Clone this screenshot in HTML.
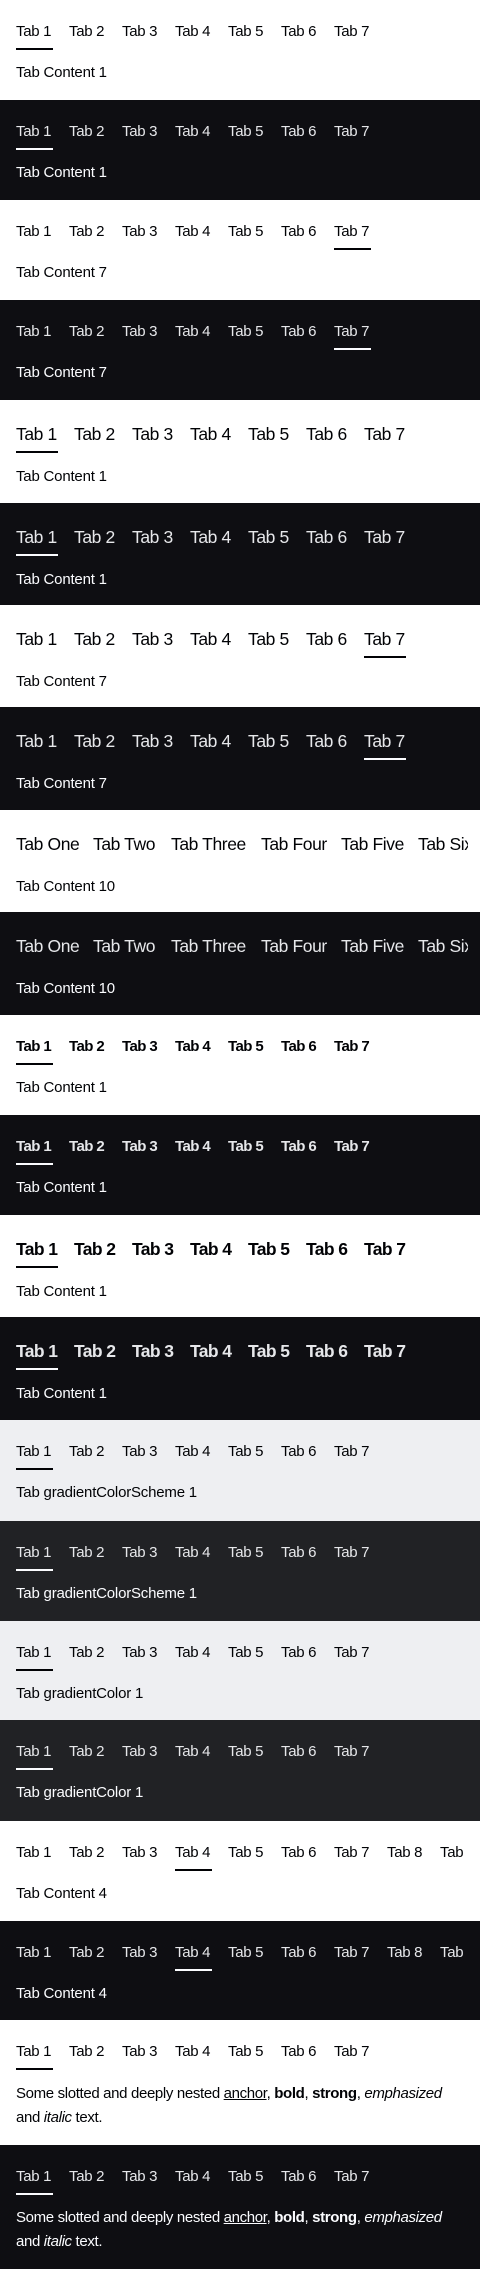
<!DOCTYPE html>
<html><head><meta charset="utf-8"><style>
*{margin:0;padding:0;box-sizing:border-box}
body{width:480px;font-family:"Liberation Sans",sans-serif;overflow:hidden}
.s{position:relative;overflow:hidden;width:480px}
.l{background:#fff;color:#010205}
.d{background:#0e0e12;color:#fbfcff}
.gl{background:#eeeff2;color:#010205}
.gd{background:#212225;color:#fbfcff}
.t{position:absolute;white-space:nowrap;top:20px;font-size:15px;line-height:24px;letter-spacing:-0.3px}
.m .t{top:21px;font-size:17.5px;line-height:26px;letter-spacing:-0.4px}
.b .t{font-weight:bold;letter-spacing:-0.6px}
.u{position:absolute;top:48px;height:2px;width:37px;background:currentColor}
.m .u{top:51px;width:42px}
.c{position:absolute;left:16px;top:61px;font-size:15px;line-height:24px;letter-spacing:-0.2px;white-space:nowrap}
.m .c{top:65px}
.d .t,.gd .t{color:#e6e7ea}
.p a{color:inherit;text-decoration:underline}
</style></head><body>

<div class="s l" style="height:100px"><span class="t" style="left:16px">Tab 1</span><span class="t" style="left:69px">Tab 2</span><span class="t" style="left:122px">Tab 3</span><span class="t" style="left:175px">Tab 4</span><span class="t" style="left:228px">Tab 5</span><span class="t" style="left:281px">Tab 6</span><span class="t" style="left:334px">Tab 7</span><div class="u" style="left:16px"></div><div class="c">Tab Content 1</div></div>

<div class="s d" style="height:100px"><span class="t" style="left:16px">Tab 1</span><span class="t" style="left:69px">Tab 2</span><span class="t" style="left:122px">Tab 3</span><span class="t" style="left:175px">Tab 4</span><span class="t" style="left:228px">Tab 5</span><span class="t" style="left:281px">Tab 6</span><span class="t" style="left:334px">Tab 7</span><div class="u" style="left:16px"></div><div class="c">Tab Content 1</div></div>

<div class="s l" style="height:100px"><span class="t" style="left:16px">Tab 1</span><span class="t" style="left:69px">Tab 2</span><span class="t" style="left:122px">Tab 3</span><span class="t" style="left:175px">Tab 4</span><span class="t" style="left:228px">Tab 5</span><span class="t" style="left:281px">Tab 6</span><span class="t" style="left:334px">Tab 7</span><div class="u" style="left:334px"></div><div class="c">Tab Content 7</div></div>

<div class="s d" style="height:100px"><span class="t" style="left:16px">Tab 1</span><span class="t" style="left:69px">Tab 2</span><span class="t" style="left:122px">Tab 3</span><span class="t" style="left:175px">Tab 4</span><span class="t" style="left:228px">Tab 5</span><span class="t" style="left:281px">Tab 6</span><span class="t" style="left:334px">Tab 7</span><div class="u" style="left:334px"></div><div class="c">Tab Content 7</div></div>

<div class="s l m" style="height:103px"><span class="t" style="left:16px">Tab 1</span><span class="t" style="left:74px">Tab 2</span><span class="t" style="left:132px">Tab 3</span><span class="t" style="left:190px">Tab 4</span><span class="t" style="left:248px">Tab 5</span><span class="t" style="left:306px">Tab 6</span><span class="t" style="left:364px">Tab 7</span><div class="u" style="left:16px"></div><div class="c">Tab Content 1</div></div>

<div class="s d m" style="height:102px"><span class="t" style="left:16px">Tab 1</span><span class="t" style="left:74px">Tab 2</span><span class="t" style="left:132px">Tab 3</span><span class="t" style="left:190px">Tab 4</span><span class="t" style="left:248px">Tab 5</span><span class="t" style="left:306px">Tab 6</span><span class="t" style="left:364px">Tab 7</span><div class="u" style="left:16px"></div><div class="c">Tab Content 1</div></div>

<div class="s l m" style="height:102px"><span class="t" style="left:16px">Tab 1</span><span class="t" style="left:74px">Tab 2</span><span class="t" style="left:132px">Tab 3</span><span class="t" style="left:190px">Tab 4</span><span class="t" style="left:248px">Tab 5</span><span class="t" style="left:306px">Tab 6</span><span class="t" style="left:364px">Tab 7</span><div class="u" style="left:364px"></div><div class="c">Tab Content 7</div></div>

<div class="s d m" style="height:103px"><span class="t" style="left:16px">Tab 1</span><span class="t" style="left:74px">Tab 2</span><span class="t" style="left:132px">Tab 3</span><span class="t" style="left:190px">Tab 4</span><span class="t" style="left:248px">Tab 5</span><span class="t" style="left:306px">Tab 6</span><span class="t" style="left:364px">Tab 7</span><div class="u" style="left:364px"></div><div class="c">Tab Content 7</div></div>

<div class="s l m" style="height:102px"><div style="position:absolute;left:0;top:0;width:468px;height:60px;overflow:hidden"><span class="t" style="left:16px">Tab One</span><span class="t" style="left:93px">Tab Two</span><span class="t" style="left:171px">Tab Three</span><span class="t" style="left:261px">Tab Four</span><span class="t" style="left:341px">Tab Five</span><span class="t" style="left:418px">Tab Six</span></div><div class="c">Tab Content 10</div></div>

<div class="s d m" style="height:103px"><div style="position:absolute;left:0;top:0;width:468px;height:60px;overflow:hidden"><span class="t" style="left:16px">Tab One</span><span class="t" style="left:93px">Tab Two</span><span class="t" style="left:171px">Tab Three</span><span class="t" style="left:261px">Tab Four</span><span class="t" style="left:341px">Tab Five</span><span class="t" style="left:418px">Tab Six</span></div><div class="c">Tab Content 10</div></div>

<div class="s l b" style="height:100px"><span class="t" style="left:16px">Tab 1</span><span class="t" style="left:69px">Tab 2</span><span class="t" style="left:122px">Tab 3</span><span class="t" style="left:175px">Tab 4</span><span class="t" style="left:228px">Tab 5</span><span class="t" style="left:281px">Tab 6</span><span class="t" style="left:334px">Tab 7</span><div class="u" style="left:16px"></div><div class="c">Tab Content 1</div></div>

<div class="s d b" style="height:100px"><span class="t" style="left:16px">Tab 1</span><span class="t" style="left:69px">Tab 2</span><span class="t" style="left:122px">Tab 3</span><span class="t" style="left:175px">Tab 4</span><span class="t" style="left:228px">Tab 5</span><span class="t" style="left:281px">Tab 6</span><span class="t" style="left:334px">Tab 7</span><div class="u" style="left:16px"></div><div class="c">Tab Content 1</div></div>

<div class="s l m b" style="height:102px"><span class="t" style="left:16px">Tab 1</span><span class="t" style="left:74px">Tab 2</span><span class="t" style="left:132px">Tab 3</span><span class="t" style="left:190px">Tab 4</span><span class="t" style="left:248px">Tab 5</span><span class="t" style="left:306px">Tab 6</span><span class="t" style="left:364px">Tab 7</span><div class="u" style="left:16px"></div><div class="c">Tab Content 1</div></div>

<div class="s d m b" style="height:103px"><span class="t" style="left:16px">Tab 1</span><span class="t" style="left:74px">Tab 2</span><span class="t" style="left:132px">Tab 3</span><span class="t" style="left:190px">Tab 4</span><span class="t" style="left:248px">Tab 5</span><span class="t" style="left:306px">Tab 6</span><span class="t" style="left:364px">Tab 7</span><div class="u" style="left:16px"></div><div class="c">Tab Content 1</div></div>

<div class="s gl" style="height:101px"><span class="t" style="left:16px">Tab 1</span><span class="t" style="left:69px">Tab 2</span><span class="t" style="left:122px">Tab 3</span><span class="t" style="left:175px">Tab 4</span><span class="t" style="left:228px">Tab 5</span><span class="t" style="left:281px">Tab 6</span><span class="t" style="left:334px">Tab 7</span><div class="u" style="left:16px"></div><div class="c">Tab gradientColorScheme 1</div></div>

<div class="s gd" style="height:100px"><span class="t" style="left:16px">Tab 1</span><span class="t" style="left:69px">Tab 2</span><span class="t" style="left:122px">Tab 3</span><span class="t" style="left:175px">Tab 4</span><span class="t" style="left:228px">Tab 5</span><span class="t" style="left:281px">Tab 6</span><span class="t" style="left:334px">Tab 7</span><div class="u" style="left:16px"></div><div class="c">Tab gradientColorScheme 1</div></div>

<div class="s gl" style="height:99px"><span class="t" style="left:16px">Tab 1</span><span class="t" style="left:69px">Tab 2</span><span class="t" style="left:122px">Tab 3</span><span class="t" style="left:175px">Tab 4</span><span class="t" style="left:228px">Tab 5</span><span class="t" style="left:281px">Tab 6</span><span class="t" style="left:334px">Tab 7</span><div class="u" style="left:16px"></div><div class="c">Tab gradientColor 1</div></div>

<div class="s gd" style="height:101px"><span class="t" style="left:16px">Tab 1</span><span class="t" style="left:69px">Tab 2</span><span class="t" style="left:122px">Tab 3</span><span class="t" style="left:175px">Tab 4</span><span class="t" style="left:228px">Tab 5</span><span class="t" style="left:281px">Tab 6</span><span class="t" style="left:334px">Tab 7</span><div class="u" style="left:16px"></div><div class="c">Tab gradientColor 1</div></div>

<div class="s l" style="height:100px"><div style="position:absolute;left:0;top:0;width:464px;height:56px;overflow:hidden"><span class="t" style="left:16px">Tab 1</span><span class="t" style="left:69px">Tab 2</span><span class="t" style="left:122px">Tab 3</span><span class="t" style="left:175px">Tab 4</span><span class="t" style="left:228px">Tab 5</span><span class="t" style="left:281px">Tab 6</span><span class="t" style="left:334px">Tab 7</span><span class="t" style="left:387px">Tab 8</span><span class="t" style="left:440px">Tab 9</span></div><div class="u" style="left:175px"></div><div class="c">Tab Content 4</div></div>

<div class="s d" style="height:99px"><div style="position:absolute;left:0;top:0;width:464px;height:56px;overflow:hidden"><span class="t" style="left:16px">Tab 1</span><span class="t" style="left:69px">Tab 2</span><span class="t" style="left:122px">Tab 3</span><span class="t" style="left:175px">Tab 4</span><span class="t" style="left:228px">Tab 5</span><span class="t" style="left:281px">Tab 6</span><span class="t" style="left:334px">Tab 7</span><span class="t" style="left:387px">Tab 8</span><span class="t" style="left:440px">Tab 9</span></div><div class="u" style="left:175px"></div><div class="c">Tab Content 4</div></div>

<div class="s l" style="height:125px"><span class="t" style="left:16px">Tab 1</span><span class="t" style="left:69px">Tab 2</span><span class="t" style="left:122px">Tab 3</span><span class="t" style="left:175px">Tab 4</span><span class="t" style="left:228px">Tab 5</span><span class="t" style="left:281px">Tab 6</span><span class="t" style="left:334px">Tab 7</span><div class="u" style="left:16px"></div><div class="c p" style="top:62px;letter-spacing:-0.35px">Some slotted and deeply nested <a>anchor</a>, <b>bold</b>, <strong>strong</strong>, <em>emphasized</em><br>and <i>italic</i> text.</div></div>

<div class="s d" style="height:124px"><span class="t" style="left:16px">Tab 1</span><span class="t" style="left:69px">Tab 2</span><span class="t" style="left:122px">Tab 3</span><span class="t" style="left:175px">Tab 4</span><span class="t" style="left:228px">Tab 5</span><span class="t" style="left:281px">Tab 6</span><span class="t" style="left:334px">Tab 7</span><div class="u" style="left:16px"></div><div class="c p" style="top:61px;letter-spacing:-0.35px">Some slotted and deeply nested <a>anchor</a>, <b>bold</b>, <strong>strong</strong>, <em>emphasized</em><br>and <i>italic</i> text.</div></div>

</body></html>
